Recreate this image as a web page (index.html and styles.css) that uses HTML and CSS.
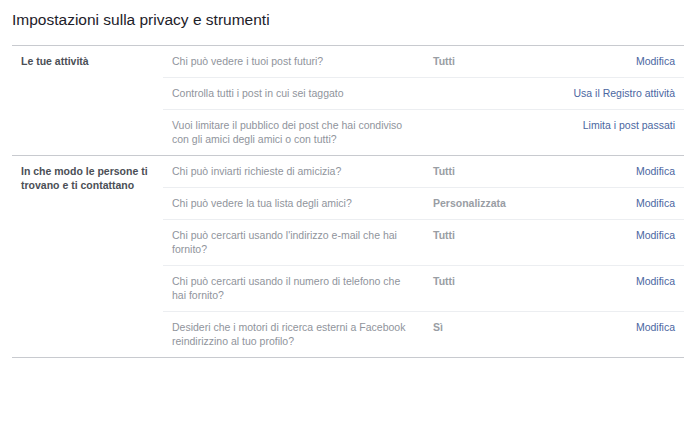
FILE: index.html
```html
<!DOCTYPE html>
<html lang="it">
<head>
<meta charset="utf-8">
<title>Impostazioni sulla privacy e strumenti</title>
<link rel="stylesheet" href="styles.css">
</head>
<body>
<div class="page">
  <h1 class="title">Impostazioni sulla privacy e strumenti</h1>
  <div class="table">
    <section class="section">
      <div class="label">Le tue attività</div>
      <div class="rows">
        <div class="row">
          <div class="q">Chi può vedere i tuoi post futuri?</div>
          <div class="v">Tutti</div>
          <a class="link" href="#">Modifica</a>
        </div>
        <div class="row">
          <div class="q">Controlla tutti i post in cui sei taggato</div>
          <div class="v"></div>
          <a class="link" href="#">Usa il Registro attività</a>
        </div>
        <div class="row">
          <div class="q">Vuoi limitare il pubblico dei post che hai condiviso con gli amici degli amici o con tutti?</div>
          <div class="v"></div>
          <a class="link" href="#">Limita i post passati</a>
        </div>
      </div>
    </section>
    <section class="section">
      <div class="label">In che modo le persone ti trovano e ti contattano</div>
      <div class="rows">
        <div class="row">
          <div class="q">Chi può inviarti richieste di amicizia?</div>
          <div class="v">Tutti</div>
          <a class="link" href="#">Modifica</a>
        </div>
        <div class="row">
          <div class="q">Chi può vedere la tua lista degli amici?</div>
          <div class="v">Personalizzata</div>
          <a class="link" href="#">Modifica</a>
        </div>
        <div class="row">
          <div class="q">Chi può cercarti usando l'indirizzo e-mail che hai fornito?</div>
          <div class="v">Tutti</div>
          <a class="link" href="#">Modifica</a>
        </div>
        <div class="row">
          <div class="q">Chi può cercarti usando il numero di telefono che hai fornito?</div>
          <div class="v">Tutti</div>
          <a class="link" href="#">Modifica</a>
        </div>
        <div class="row">
          <div class="q">Desideri che i motori di ricerca esterni a Facebook reindirizzino al tuo profilo?</div>
          <div class="v">Sì</div>
          <a class="link" href="#">Modifica</a>
        </div>
      </div>
    </section>
  </div>
</div>
</body>
</html>
```

FILE: styles.css
```css
html, body {
  margin: 0;
  padding: 0;
  background: #ffffff;
}
body {
  font-family: "Liberation Sans", Arial, Helvetica, sans-serif;
  font-size: 10.5px;
  line-height: 14px;
  color: #90949c;
}
.page {
  padding: 10px 16px 0 12px;
}
.title {
  margin: 0 0 15px 0;
  font-size: 15.5px;
  line-height: 20px;
  font-weight: normal;
  color: #1d2129;
}
.table {
  border-top: 1px solid #c8cacf;
}
.section {
  display: flex;
  border-bottom: 1px solid #c8cacf;
}
.label {
  width: 142px;
  padding: 8px 0 0 9px;
  font-weight: bold;
  color: #4b4f56;
  flex-shrink: 0;
}
.rows {
  flex: 1;
  display: flex;
  flex-direction: column;
}
.row {
  display: flex;
  padding: 8px 9px 9px 9px;
  border-bottom: 1px solid #eceef1;
}
.row:last-child {
  border-bottom: none;
}
.q {
  width: 236px;
  padding-right: 25px;
  flex-shrink: 0;
}
.v {
  flex: 1;
  font-weight: bold;
  color: #999da4;
}
.link {
  color: #4b67a1;
  text-decoration: none;
  text-align: right;
}
```
